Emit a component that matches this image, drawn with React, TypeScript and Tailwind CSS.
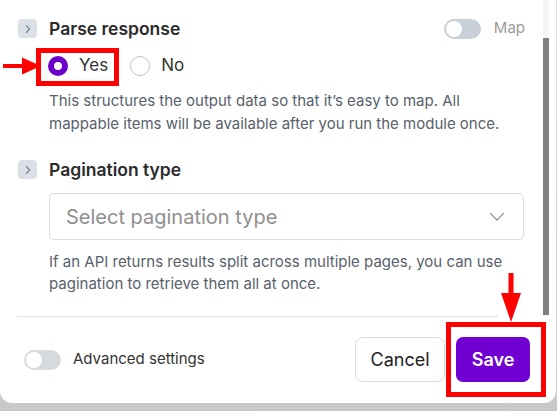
import React from "react";

function Chevron() {
  return (
    <div className="w-[19px] h-[19px] rounded-[4px] bg-[#dbe0e6] flex items-center justify-center shrink-0">
      <svg width="10" height="10" viewBox="0 0 10 10" fill="none">
        <path d="M3.5 1.8 L6.7 5 L3.5 8.2" stroke="#7d8794" strokeWidth="1.3" strokeLinecap="round" strokeLinejoin="round" />
      </svg>
    </div>
  );
}

function Toggle({ color }: { color: string }) {
  return (
    <div className={`w-[37px] h-[20px] rounded-full relative shrink-0 ${color}`}>
      <div className="absolute left-[2px] top-[2px] w-[16px] h-[16px] rounded-full bg-white" />
    </div>
  );
}

export default function App() {
  return (
    <div
      className="w-[557px] h-[411px] relative overflow-hidden bg-gradient-to-b from-[#e2e2e2] to-[#c8c8c8]"
      style={{ fontFamily: "Inter, 'Noto Sans', sans-serif" }}
    >
      <div className="w-[556px] h-[403px] bg-white rounded-b-[12px] flex flex-col relative">
        {/* scroll content */}
        <div className="h-[316px] pl-[18px] pr-[32px] pt-[19px] flex flex-col">
          <div className="flex items-center h-[19px]">
            <Chevron />
            <div className="ml-[12px] text-[17.5px] font-semibold text-[#2b2b2b] leading-none">Parse response</div>
            <div className="ml-auto flex items-center">
              <Toggle color="bg-[#c9d0d8]" />
              <span className="ml-[13px] text-[15px] text-[#9a9a9a] mr-[-1px]">Map</span>
            </div>
          </div>

          <div className="flex items-center mt-[18px] ml-[30px] h-[20px]">
            <div className="w-[20px] h-[20px] rounded-full bg-[#6b00cc] flex items-center justify-center">
              <div className="w-[8px] h-[8px] rounded-full bg-white" />
            </div>
            <span className="ml-[11px] text-[17px] text-[#333]">Yes</span>
            <div className="ml-[22px] w-[20px] h-[20px] rounded-full border border-[#c4c4c4] bg-white" />
            <span className="ml-[11px] text-[17px] text-[#333]">No</span>
          </div>

          <p className="ml-[31px] mt-[13px] text-[15px] leading-[23px] text-[#58616c]">
            This structures the output data so that it’s easy to map. All
            <br />
            mappable items will be available after you run the module once.
          </p>

          <div className="flex items-center mt-[25px] h-[19px]">
            <Chevron />
            <div className="ml-[12px] text-[17.5px] font-semibold text-[#2b2b2b] leading-none">Pagination type</div>
          </div>

          <div className="ml-[31px] mt-[14px] h-[47px] border border-[#dcdcdc] rounded-[5px] flex items-center pl-[16px] pr-[18px]">
            <span className="text-[20px] text-[#8f8f8f]">Select pagination type</span>
            <svg className="ml-auto" width="16" height="10" viewBox="0 0 16 10" fill="none">
              <path d="M1.5 1.5 L8 8 L14.5 1.5" stroke="#8a94a0" strokeWidth="1.2" strokeLinecap="round" strokeLinejoin="round" />
            </svg>
          </div>

          <p className="ml-[31px] mt-[11px] text-[15px] leading-[22px] text-[#58616c]">
            If an API returns results split across multiple pages, you can use
            <br />
            pagination to retrieve them all at once.
          </p>
        </div>

        {/* divider */}
        <div className="ml-[17px] mr-[58px] h-px bg-[#dcdfe3]" />

        {/* footer */}
        <div className="flex items-center pl-[24px] pr-[26px] pt-[20px]">
          <Toggle color="bg-[#d6dadf]" />
          <span className="ml-[12px] text-[15px] text-[#333]">Advanced settings</span>
          <div className="ml-auto flex items-center gap-[11px]">
            <button className="h-[45px] w-[90px] rounded-[8px] border border-[#dcdcdc] bg-white text-[18px] text-[#222]">
              Cancel
            </button>
            <button className="h-[45px] w-[74px] rounded-[7px] bg-[#7000d2] text-[18px] font-semibold text-white">
              Save
            </button>
          </div>
        </div>

        {/* scrollbar */}
        <div className="absolute left-[543px] top-0 w-[6px] h-[316px] bg-[#f5f5f5]">
          <div className="absolute left-0 top-[38px] w-[6px] h-[277px] bg-[#808080]" />
        </div>
      </div>

      {/* annotations */}
      <div className="absolute left-[36px] top-[48px] w-[83px] h-[38px] border-[5px] border-[#ff0000]" />
      <svg className="absolute left-[2px] top-[57px]" width="40" height="18" viewBox="0 0 40 18">
        <rect x="1" y="7" width="21" height="4" fill="#ff0000" />
        <polygon points="20,0.5 39,9 20,17.5" fill="#ff0000" />
      </svg>
      <div className="absolute left-[446px] top-[322px] w-[100px] h-[75px] border-[5px] border-[#ff0000]" />
      <svg className="absolute left-[500px] top-[272px]" width="22" height="51" viewBox="0 0 22 51">
        <rect x="8.5" y="1" width="5" height="22" fill="#ff0000" />
        <polygon points="1,21 21,21 11,50" fill="#ff0000" />
      </svg>
    </div>
  );
}
